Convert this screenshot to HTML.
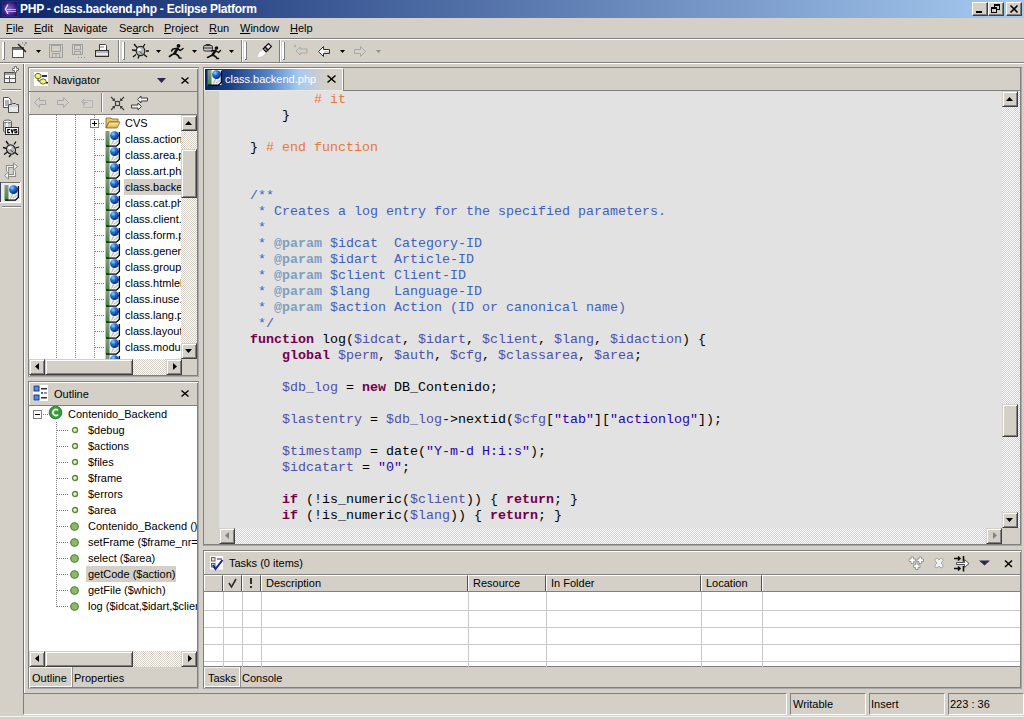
<!DOCTYPE html>
<html><head><meta charset="utf-8">
<style>
*{margin:0;padding:0;box-sizing:border-box}
html,body{width:1024px;height:719px;overflow:hidden;background:#D4D0C8;font-family:"Liberation Sans",sans-serif;font-size:11px;color:#000;position:relative}
.a{position:absolute}
.t{position:absolute;white-space:nowrap;line-height:13px}
#title{left:0;top:0;width:1024px;height:18px;background:linear-gradient(to right,#0A246A 0%,#A6CAF0 100%)}
.wb{position:absolute;width:16px;height:14px;top:2px;background:#D4D0C8;border:1px solid;border-color:#fff #404040 #404040 #fff;box-shadow:inset -1px -1px #808080}
.hl{position:absolute;height:1px}
.vl{position:absolute;width:1px}
.pnl{position:absolute;background:#D4D0C8;border-style:solid;border-width:1px;border-color:#808080 #A8A8A8 #A8A8A8 #808080;box-shadow:inset 1px 1px #fff,inset -1px -1px #808080}
.btn{position:absolute;background:#D4D0C8;border:1px solid;border-color:#D4D0C8 #404040 #404040 #D4D0C8;box-shadow:inset 1px 1px #fff,inset -1px -1px #808080}
.trk{position:absolute;background:repeating-conic-gradient(#fff 0 25%,#D4D0C8 0 50%) 0 0/2px 2px}
.code{font-family:"Liberation Mono",monospace;font-size:13.333px;line-height:16px;white-space:pre;position:absolute;color:#000}
.kw{color:#72004C;font-weight:bold}
.v{color:#5050A8}
.s{color:#2A00B0}
.c{color:#3F5FBF}
.g{color:#7F9FBF;font-weight:bold}
.h{color:#E8783A}
svg{position:absolute;overflow:visible}
.dv{position:absolute;width:1px;background:repeating-linear-gradient(to bottom,#808080 0 1px,transparent 1px 2px)}
.dh{position:absolute;height:1px;background:repeating-linear-gradient(to right,#808080 0 1px,transparent 1px 2px)}
</style></head><body>
<svg width="0" height="0" style="position:absolute">
<defs>
<radialGradient id="gb" cx="35%" cy="30%" r="70%"><stop offset="0" stop-color="#9CD0FF"/><stop offset=".45" stop-color="#1E6FD8"/><stop offset="1" stop-color="#0A2E80"/></radialGradient>
<linearGradient id="gs" x1="0" y1="0" x2="0" y2="1"><stop offset="0" stop-color="#8A9A8A"/><stop offset="1" stop-color="#3A8A3A"/></linearGradient>
<linearGradient id="fy" x1="0" y1="0" x2="0" y2="1"><stop offset="0" stop-color="#FFF2A8"/><stop offset="1" stop-color="#D8B040"/></linearGradient>
<symbol id="php" viewBox="0 0 16 16">
 <rect x="4" y="0" width="10.5" height="15" fill="#EEF0F0"/>
 <rect x="0.5" y="0" width="4" height="15.5" fill="url(#gs)"/>
 <path d="M6.5 13.5l2.5-5M9 13l4-3" stroke="#A0A8B0" stroke-width=".9"/>
 <circle cx="9.5" cy="4.6" r="4.4" fill="url(#gb)"/>
 <path d="M14.4 1v11.2l-3 3H1" fill="none" stroke="#000" stroke-width="1.3"/>
</symbol>
<symbol id="fold" viewBox="0 0 16 16">
 <path d="M1 3h5l1 1h6v3H4L1 13z" fill="#E8C860" stroke="#806020" stroke-width=".8"/>
 <path d="M1 13l3-6h11l-3 6z" fill="url(#fy)" stroke="#806020" stroke-width=".8"/>
</symbol>
</defs>
</svg>

<!-- ============ TITLE BAR ============ -->
<div id="title" class="a">
  <svg style="left:2px;top:1px" width="16" height="16" viewBox="0 0 16 16">
    <defs><radialGradient id="ec" cx="45%" cy="50%" r="60%"><stop offset="0" stop-color="#8A6AC8"/><stop offset=".6" stop-color="#4A2A90"/><stop offset="1" stop-color="#1A1060"/></radialGradient></defs>
    <rect x="0.5" y="0.5" width="15" height="15" fill="url(#ec)" stroke="#2A2A80"/>
    <path d="M5 8.5h9M5 10.5h9" stroke="#B8A8F0" stroke-width="1"/>
    <path d="M6 3.5L3.5 8l2.5 5" fill="none" stroke="#E0D8FF" stroke-width="1.5"/>
  </svg>
  <div class="t" style="left:20px;top:3px;color:#fff;font-weight:bold;font-size:12px;letter-spacing:-0.25px">PHP - class.backend.php - Eclipse Platform</div>
  <div class="wb" style="left:972px"><div class="a" style="left:3px;top:8px;width:6px;height:2px;background:#000"></div></div>
  <div class="wb" style="left:988px">
    <div class="a" style="left:5px;top:1px;width:6px;height:6px;border:1px solid #000;border-top-width:2px"></div>
    <div class="a" style="left:2px;top:4px;width:6px;height:6px;border:1px solid #000;border-top-width:2px;background:#D4D0C8"></div>
  </div>
  <div class="wb" style="left:1006px"><svg style="left:3px;top:2px" width="8" height="8"><path d="M0.5 0.5l7 7M7.5 0.5l-7 7" stroke="#000" stroke-width="1.6"/></svg></div>
</div>

<!-- ============ MENU ============ -->
<div class="t" style="left:6px;top:22px"><u>F</u>ile</div>
<div class="t" style="left:34px;top:22px"><u>E</u>dit</div>
<div class="t" style="left:64px;top:22px"><u>N</u>avigate</div>
<div class="t" style="left:119px;top:22px">Se<u>a</u>rch</div>
<div class="t" style="left:164px;top:22px"><u>P</u>roject</div>
<div class="t" style="left:209px;top:22px"><u>R</u>un</div>
<div class="t" style="left:240px;top:22px"><u>W</u>indow</div>
<div class="t" style="left:290px;top:22px"><u>H</u>elp</div>

<div class="hl" style="left:0;top:38px;width:1024px;background:#808080"></div>
<div class="hl" style="left:0;top:39px;width:1024px;background:#fff"></div>
<div class="hl" style="left:0;top:62px;width:1024px;background:#808080"></div>
<div class="hl" style="left:0;top:63px;width:1024px;background:#fff"></div>

<!-- TOOLBAR placeholder -->
<svg style="left:0;top:40px" width="400" height="22" viewBox="0 40 400 22">
 <!-- grips -->
 <g fill="#fff"><rect x="2" y="42" width="2" height="18"/><rect x="122" y="42" width="2" height="18"/><rect x="244" y="42" width="2" height="18"/><rect x="282" y="42" width="2" height="18"/></g>
 <g fill="#808080"><rect x="4" y="42" width="1" height="18"/><rect x="3" y="59" width="2" height="1"/><rect x="124" y="42" width="1" height="18"/><rect x="123" y="59" width="2" height="1"/><rect x="246" y="42" width="1" height="18"/><rect x="245" y="59" width="2" height="1"/><rect x="284" y="42" width="1" height="18"/><rect x="283" y="59" width="2" height="1"/>
 <rect x="118" y="40" width="1" height="22"/><rect x="241" y="40" width="1" height="22"/><rect x="279" y="40" width="1" height="22"/></g>
 <g fill="#fff"><rect x="119" y="40" width="1" height="22"/><rect x="242" y="40" width="1" height="22"/><rect x="280" y="40" width="1" height="22"/></g>
 <!-- new wizard -->
 <rect x="12.5" y="47.5" width="11" height="10" fill="#fff" stroke="#505050"/>
 <rect x="13" y="48" width="10" height="2" fill="#707070"/>
 <path d="M18 44l8 8" stroke="#202020" stroke-width="1.5"/>
 <path d="M22 43h1M25 43h2M24 45h1" stroke="#606060"/>
 <!-- dropdowns -->
 <g fill="#000"><path d="M36 50h5l-2.5 3z"/><path d="M156 50h5l-2.5 3z"/><path d="M192 50h5l-2.5 3z"/><path d="M229 50h5l-2.5 3z"/><path d="M340 50h5l-2.5 3z"/></g>
 <path d="M376 50h5l-2.5 3z" fill="#909090"/>
 <!-- save disabled -->
 <g fill="none" stroke="#A0A0A0"><rect x="49.5" y="44.5" width="13" height="13"/><rect x="51.5" y="45.5" width="9" height="6"/><rect x="52.5" y="53.5" width="7" height="4"/><path d="M56 54v3"/></g>
 <!-- save all disabled -->
 <g fill="none" stroke="#A0A0A0"><rect x="72.5" y="44.5" width="10" height="10"/><rect x="74.5" y="45.5" width="6" height="4"/><rect x="74.5" y="51.5" width="6" height="3"/></g>
 <g fill="#909090"><rect x="78" y="57" width="1" height="1"/><rect x="81" y="57" width="1" height="1"/><rect x="84" y="57" width="1" height="1"/></g>
 <!-- print -->
 <path d="M99.5 44.5h6l1 1v5h-7z" fill="#fff" stroke="#404040"/>
 <path d="M100 47h4" stroke="#808080"/>
 <rect x="95.5" y="50.5" width="13" height="6" fill="#B8B8B8" stroke="#303030"/>
 <rect x="96" y="53" width="12" height="2" fill="#E8E8E8"/>
 <!-- bug -->
 <g stroke="#101010" stroke-width="1.3" fill="none"><path d="M134 44l3 3.5M145 44l-2 3M132 50l4 0.5M146 51h3M133 57l3-2.5M147 57l-3-2.5M138 58.5l1-2.5"/></g>
 <ellipse cx="140.5" cy="51" rx="4.3" ry="4.6" fill="#B8B8B8" stroke="#202020" stroke-width="1.2"/>
 <ellipse cx="139.3" cy="49.5" rx="1.9" ry="1.6" fill="#F4F4F4"/>
 <path d="M139.5 51.5l3 2.5" stroke="#404040"/>
 <!-- runner -->
 <g stroke="#101010" stroke-linecap="round" stroke-linejoin="round" fill="none">
  <path d="M177.5 48.5l-3 5" stroke-width="2.6"/>
  <path d="M176 48.5l-3 0.5-1.5 2M178 49l2.5 1.5 2.5-2" stroke-width="1.5"/>
  <path d="M174.5 53.5l-3 1.5-2 1.5M175 53.5l3 2 1.5 2.5h1.5" stroke-width="1.7"/>
 </g>
 <circle cx="178.5" cy="45.8" r="1.9" fill="#101010"/>
 <!-- external tools -->
 <rect x="203.5" y="45.5" width="9" height="5.5" rx="1.5" fill="#C8C8C8" stroke="#303030"/>
 <path d="M206 45.5v-1h4v1M204 48h8" stroke="#303030" fill="none"/>
 <g stroke="#101010" stroke-linecap="round" stroke-linejoin="round" fill="none">
  <path d="M215.5 50.5l-3 4.5" stroke-width="2.4"/>
  <path d="M214 50.5l-2.5 0.5M216 51l2.5 1.5 2-2" stroke-width="1.4"/>
  <path d="M212.5 55l-3 1.5-2 1M213 55l3 2 1 1.5h1.5" stroke-width="1.6"/>
 </g>
 <circle cx="216.5" cy="48" r="1.8" fill="#101010"/>
 <!-- brush -->
 <path d="M265 47l3.5-3.5 3 3-3.5 3.5z" fill="#E8E8E8" stroke="#101010" stroke-width="1.1"/>
 <path d="M263 49l2-2 3 3-2 2z" fill="#909090" stroke="#101010" stroke-width="1.1"/>
 <path d="M262.5 49.5l3.5 3.5-3.5 3.5-5.5 1.5 1.5-5z" fill="#FCFCFC" stroke="#C8C8C8" stroke-width=".7"/>
 <!-- last edit disabled -->
 <path d="M300 47l-4 4 4 4v-2h7v-4h-7z" fill="none" stroke="#A8A8A8"/>
 <circle cx="295" cy="46" r="1.2" fill="#B0B0B0"/>
 <!-- back -->
 <path d="M323.5 46.5l-5 5 5 5v-3h6v-4h-6z" fill="#fff" stroke="#303030"/>
 <path d="M324 52h5" stroke="#A0A0A0"/>
 <!-- forward disabled -->
 <path d="M360.5 46.5l5 5-5 5v-3h-6v-4h6z" fill="none" stroke="#A8A8A8"/>
</svg>


<!-- ============ LEFT SHORTCUT BAR ============ -->
<div class="vl" style="left:23px;top:64px;height:650px;background:#707070"></div>
<div class="vl" style="left:24px;top:64px;height:629px;background:#fff"></div>
<svg style="left:0;top:64px" width="23" height="150" viewBox="0 64 23 150">
 <!-- open perspective -->
 <rect x="4.5" y="72.5" width="11" height="10" fill="#F4F4F4" stroke="#505050"/>
 <rect x="5" y="73" width="10" height="2" fill="#A0A0A0"/>
 <path d="M5 78.5h10M9.5 76v6" stroke="#606060"/>
 <path d="M14.5 66.5h2v2h2v2h-2v2h-2v-2h-2v-2h2z" fill="#fff" stroke="#707070"/>
 <rect x="2" y="89" width="19" height="1" fill="#808080"/><rect x="2" y="90" width="19" height="1" fill="#fff"/>
 <!-- resource -->
 <path d="M3.5 97.5h5l2.5 2.5v7.5h-7.5z" fill="#fff" stroke="#505050"/>
 <path d="M5 101h4M5 103h4M5 105h3" stroke="#606060"/>
 <path d="M8.5 104.5h3l1-1h3l1 1h2v8h-10z" fill="#D0D0D0" stroke="#505050"/>
 <rect x="9" y="107" width="9" height="5" fill="#E8E8E8"/>
 <!-- cvs -->
 <path d="M3.5 121.5v9.5a4 1.5 0 0 0 8 0v-9.5" fill="#C8C8C8" stroke="#606060"/>
 <ellipse cx="7.5" cy="121.5" rx="4" ry="1.5" fill="#F0F0F0" stroke="#606060"/>
 <rect x="6" y="123" width="2" height="6" fill="#F0F0F0"/>
 <rect x="5.5" y="127.5" width="13" height="7" fill="#fff" stroke="#303030"/>
 <g stroke="#000" stroke-width="1.2" fill="none"><path d="M10 129.5h-2.2v3.2H10M11 129.2l1.2 3.5 1.2-3.5M17 129.5h-2.3v1.5h2v1.7h-2.3"/></g>
 <!-- debug -->
 <g stroke="#101010" stroke-width="1.3"><path d="M6 141l2.5 3.5M16 141.5l-2 3M3 147.5l4 1M15.5 148l3.5-1M4 154.5l3.5-2.5M15 152.5l3 2.5M9 157l2-2.5"/></g>
 <ellipse cx="11" cy="149.5" rx="4.3" ry="4.8" transform="rotate(-35 11 149.5)" fill="#B8B8B8" stroke="#202020" stroke-width="1.2"/>
 <ellipse cx="9.8" cy="147.8" rx="1.8" ry="1.5" fill="#F4F4F4"/>
 <path d="M10.5 150l3 2.5" stroke="#404040"/>
 <!-- team sync -->
 <g fill="none" stroke-linejoin="miter">
  <path d="M14 166.5H7.5v5" stroke="#8A8A8A" stroke-width="3.2"/>
  <path d="M14 166.5H7.5v5" stroke="#F4F4F4" stroke-width="1.2"/>
  <path d="M8 175.5h6.5v-5" stroke="#8A8A8A" stroke-width="3.2"/>
  <path d="M8 175.5h6.5v-5" stroke="#F4F4F4" stroke-width="1.2"/>
 </g>
 <path d="M13.5 163l4 3.5-4 3.5z" fill="#F4F4F4" stroke="#8A8A8A"/>
 <path d="M8.5 172l-4 3.5 4 3.5z" fill="#F4F4F4" stroke="#8A8A8A"/>
 <!-- selected php button -->
 <rect x="0" y="182" width="21" height="21" fill="#EEECE8"/>
 <rect x="0" y="182" width="21" height="1" fill="#707070"/><rect x="0" y="182" width="1" height="21" fill="#404060"/>
 <rect x="0" y="202" width="21" height="1" fill="#fff"/><rect x="20" y="182" width="1" height="21" fill="#fff"/>
 <rect x="2" y="206" width="19" height="1" fill="#808080"/><rect x="2" y="207" width="19" height="1" fill="#fff"/>
</svg>
<svg style="left:4px;top:185px" width="16" height="16"><use href="#php"/></svg>


<!-- ============ NAVIGATOR ============ -->
<div class="pnl" style="left:28px;top:67px;width:171px;height:310px"></div>
<div id="nav">
<svg style="left:33px;top:71px" width="16" height="16" viewBox="0 0 16 16">
 <rect x="1" y="1" width="14" height="14" fill="#fff"/>
 <path d="M5 6v4h3" fill="none" stroke="#303030"/>
 <ellipse cx="5" cy="5" rx="3.2" ry="2.6" fill="#F0F080" stroke="#707020"/>
 <ellipse cx="10" cy="10.5" rx="3.2" ry="2.6" fill="#F0F080" stroke="#707020"/>
 <rect x="9" y="4" width="5" height="2" fill="#303060"/>
 <rect x="13" y="11" width="2" height="1.5" fill="#202020"/>
</svg>
<div class="t" style="left:53px;top:74px">Navigator</div>
<svg style="left:157px;top:78px" width="10" height="5"><path d="M0 0h9L4.5 5z" fill="#2A2A50"/></svg>
<svg style="left:181px;top:77px" width="8" height="7"><path d="M0.5 0.5l7 6M7.5 0.5l-7 6" stroke="#000" stroke-width="1.4"/></svg>
<div class="hl" style="left:29px;top:91px;width:168px;background:#808080"></div>
<div class="hl" style="left:29px;top:114px;width:168px;background:#808080"></div>
<svg style="left:28px;top:92px" width="130" height="22" viewBox="28 92 130 22">
 <g fill="none" stroke="#A8A8A8">
  <path d="M39.5 97.5l-5 5 5 5v-3h6v-4h-6z"/>
  <path d="M63.5 97.5l5 5-5 5v-3h-6v-4h6z"/>
  <path d="M84.5 98.5l-3 3 3 3v-2h3" />
  <rect x="83.5" y="100.5" width="9" height="7" stroke="#B8B8B8"/>
 </g>
 <rect x="101" y="93" width="1" height="19" fill="#808080"/><rect x="102" y="93" width="1" height="19" fill="#fff"/>
 <g stroke="#404040" stroke-width="1.2" fill="none">
  <rect x="115.5" y="101.5" width="4" height="4"/>
  <path d="M111 97l3.5 3.5M124 97l-3.5 3.5M111 110l3.5-3.5M124 110l-3.5-3.5"/>
 </g>
 <g fill="#404040"><path d="M115 101l-3 0 3-3z"/><path d="M120 101h3l-3-3z"/><path d="M115 106h-3l3 3z"/><path d="M120 106h3l-3 3z"/></g>
 <path d="M137.5 99.5l3.5-3.5v2h6.5v3h-6.5v2z" fill="#F0F0F0" stroke="#404040"/>
 <path d="M141.5 106.5l-3.5-3.5v2h-6.5v3h6.5v2z" fill="#F0F0F0" stroke="#404040"/>
</svg>
<div class="a" style="left:29px;top:115px;width:152px;height:244px;background:#fff;overflow:hidden">
<div class="dv" style="left:27px;top:0;height:244px"></div>
<div class="dv" style="left:46px;top:0;height:244px"></div>
<div class="dv" style="left:65px;top:0;height:244px"></div>
<div class="a" style="left:61px;top:4px;width:9px;height:9px;background:#fff;border:1px solid #808080"></div>
<div class="a" style="left:63px;top:8px;width:5px;height:1px;background:#000"></div>
<div class="a" style="left:65px;top:6px;width:1px;height:5px;background:#000"></div>
<div class="dh" style="left:70px;top:8px;width:6px"></div>
<svg style="left:76px;top:0px" width="16" height="16"><use href="#fold"/></svg>
<div class="t" style="left:96px;top:2px">CVS</div>
<div class="dh" style="left:66px;top:24px;width:10px"></div>
<svg style="left:76px;top:16px" width="16" height="16"><use href="#php"/></svg>
<div class="t" style="left:96px;top:18px">class.action.php</div>
<div class="dh" style="left:66px;top:40px;width:10px"></div>
<svg style="left:76px;top:32px" width="16" height="16"><use href="#php"/></svg>
<div class="t" style="left:96px;top:34px">class.area.php</div>
<div class="dh" style="left:66px;top:56px;width:10px"></div>
<svg style="left:76px;top:48px" width="16" height="16"><use href="#php"/></svg>
<div class="t" style="left:96px;top:50px">class.art.php</div>
<div class="a" style="left:95px;top:64px;width:70px;height:16px;background:#D4D0C8"></div>
<div class="dh" style="left:66px;top:72px;width:10px"></div>
<svg style="left:76px;top:64px" width="16" height="16"><use href="#php"/></svg>
<div class="t" style="left:96px;top:66px">class.backend.php</div>
<div class="dh" style="left:66px;top:88px;width:10px"></div>
<svg style="left:76px;top:80px" width="16" height="16"><use href="#php"/></svg>
<div class="t" style="left:96px;top:82px">class.cat.php</div>
<div class="dh" style="left:66px;top:104px;width:10px"></div>
<svg style="left:76px;top:96px" width="16" height="16"><use href="#php"/></svg>
<div class="t" style="left:96px;top:98px">class.client.php</div>
<div class="dh" style="left:66px;top:120px;width:10px"></div>
<svg style="left:76px;top:112px" width="16" height="16"><use href="#php"/></svg>
<div class="t" style="left:96px;top:114px">class.form.php</div>
<div class="dh" style="left:66px;top:136px;width:10px"></div>
<svg style="left:76px;top:128px" width="16" height="16"><use href="#php"/></svg>
<div class="t" style="left:96px;top:130px">class.generic.php</div>
<div class="dh" style="left:66px;top:152px;width:10px"></div>
<svg style="left:76px;top:144px" width="16" height="16"><use href="#php"/></svg>
<div class="t" style="left:96px;top:146px">class.group.php</div>
<div class="dh" style="left:66px;top:168px;width:10px"></div>
<svg style="left:76px;top:160px" width="16" height="16"><use href="#php"/></svg>
<div class="t" style="left:96px;top:162px">class.htmlelements.php</div>
<div class="dh" style="left:66px;top:184px;width:10px"></div>
<svg style="left:76px;top:176px" width="16" height="16"><use href="#php"/></svg>
<div class="t" style="left:96px;top:178px">class.inuse.php</div>
<div class="dh" style="left:66px;top:200px;width:10px"></div>
<svg style="left:76px;top:192px" width="16" height="16"><use href="#php"/></svg>
<div class="t" style="left:96px;top:194px">class.lang.php</div>
<div class="dh" style="left:66px;top:216px;width:10px"></div>
<svg style="left:76px;top:208px" width="16" height="16"><use href="#php"/></svg>
<div class="t" style="left:96px;top:210px">class.layout.php</div>
<div class="dh" style="left:66px;top:232px;width:10px"></div>
<svg style="left:76px;top:224px" width="16" height="16"><use href="#php"/></svg>
<div class="t" style="left:96px;top:226px">class.module.php</div>
<div class="dh" style="left:66px;top:248px;width:10px"></div>
<svg style="left:76px;top:240px" width="16" height="16"><use href="#php"/></svg>
<div class="t" style="left:96px;top:242px">class.navigation.php</div>
</div>
<div class="trk" style="left:181px;top:115px;width:16px;height:244px"></div>
<div class="btn" style="left:181px;top:115px;width:16px;height:16px"><svg style="left:3px;top:5px" width="8" height="5"><path d="M0 4h7L3.5 0z" fill="#000"/></svg></div>
<div class="btn" style="left:181px;top:149px;width:16px;height:49px"></div>
<div class="btn" style="left:181px;top:343px;width:16px;height:16px"><svg style="left:3px;top:5px" width="8" height="5"><path d="M0 0h7L3.5 4z" fill="#000"/></svg></div>
<div class="trk" style="left:29px;top:359px;width:152px;height:16px"></div>
<div class="btn" style="left:29px;top:359px;width:16px;height:16px"><svg style="left:5px;top:3px" width="5" height="8"><path d="M4 0v7L0 3.5z" fill="#000"/></svg></div>
<div class="btn" style="left:45px;top:359px;width:88px;height:16px"></div>
<div class="btn" style="left:166px;top:359px;width:16px;height:16px"><svg style="left:6px;top:3px" width="5" height="8"><path d="M0 0v7L4 3.5z" fill="#000"/></svg></div>
<div class="a" style="left:182px;top:359px;width:15px;height:16px;background:#D4D0C8"></div>
</div>


<!-- ============ OUTLINE ============ -->
<div class="pnl" style="left:28px;top:381px;width:171px;height:308px"></div>
<div id="outline">
<svg style="left:33px;top:385px" width="16" height="16" viewBox="0 0 16 16">
 <rect x="0" y="0" width="15" height="16" fill="#fff"/>
 <rect x="1" y="1" width="5" height="5" fill="#5A8AE0" stroke="#1030A0"/>
 <rect x="1" y="10" width="5" height="5" fill="#5A8AE0" stroke="#1030A0"/>
 <rect x="8" y="3" width="6" height="1.5" fill="#303030"/>
 <rect x="8" y="7" width="2" height="2" fill="#6060A0"/><rect x="11" y="7.5" width="3" height="1" fill="#303030"/>
 <rect x="8" y="12" width="6" height="1.5" fill="#303030"/>
</svg>
<div class="t" style="left:54px;top:388px">Outline</div>
<svg style="left:181px;top:390px" width="8" height="7"><path d="M0.5 0.5l7 6M7.5 0.5l-7 6" stroke="#000" stroke-width="1.4"/></svg>
<div class="hl" style="left:29px;top:405px;width:168px;background:#808080"></div>
<div class="a" style="left:29px;top:406px;width:168px;height:245px;background:#fff;overflow:hidden">
<div class="dv" style="left:27px;top:16px;height:186px"></div>
<div class="a" style="left:4px;top:4px;width:9px;height:9px;background:#fff;border:1px solid #808080"></div>
<div class="a" style="left:6px;top:8px;width:5px;height:1px;background:#000"></div>
<div class="dh" style="left:14px;top:8px;width:6px"></div>
<svg style="left:19px;top:0px" width="16" height="16" viewBox="0 0 16 16"><circle cx="7.5" cy="6.5" r="6.3" fill="#3A9A40" stroke="#2A7A30"/><path d="M10 4.3a3 3 0 1 0 0 4.4" fill="none" stroke="#E8FFE0" stroke-width="1.8"/></svg>
<div class="t" style="left:39px;top:2px">Contenido_Backend</div>
<div class="dh" style="left:28px;top:24px;width:11px"></div>
<svg style="left:42px;top:20px" width="8" height="8"><circle cx="4" cy="4" r="2.5" fill="#E8F4C8" stroke="#5A8A3A" stroke-width="1.4"/></svg>
<div class="t" style="left:59px;top:18px">$debug</div>
<div class="dh" style="left:28px;top:40px;width:11px"></div>
<svg style="left:42px;top:36px" width="8" height="8"><circle cx="4" cy="4" r="2.5" fill="#E8F4C8" stroke="#5A8A3A" stroke-width="1.4"/></svg>
<div class="t" style="left:59px;top:34px">$actions</div>
<div class="dh" style="left:28px;top:56px;width:11px"></div>
<svg style="left:42px;top:52px" width="8" height="8"><circle cx="4" cy="4" r="2.5" fill="#E8F4C8" stroke="#5A8A3A" stroke-width="1.4"/></svg>
<div class="t" style="left:59px;top:50px">$files</div>
<div class="dh" style="left:28px;top:72px;width:11px"></div>
<svg style="left:42px;top:68px" width="8" height="8"><circle cx="4" cy="4" r="2.5" fill="#E8F4C8" stroke="#5A8A3A" stroke-width="1.4"/></svg>
<div class="t" style="left:59px;top:66px">$frame</div>
<div class="dh" style="left:28px;top:88px;width:11px"></div>
<svg style="left:42px;top:84px" width="8" height="8"><circle cx="4" cy="4" r="2.5" fill="#E8F4C8" stroke="#5A8A3A" stroke-width="1.4"/></svg>
<div class="t" style="left:59px;top:82px">$errors</div>
<div class="dh" style="left:28px;top:104px;width:11px"></div>
<svg style="left:42px;top:100px" width="8" height="8"><circle cx="4" cy="4" r="2.5" fill="#E8F4C8" stroke="#5A8A3A" stroke-width="1.4"/></svg>
<div class="t" style="left:59px;top:98px">$area</div>
<div class="dh" style="left:28px;top:120px;width:11px"></div>
<svg style="left:41px;top:116px" width="10" height="10"><circle cx="4.5" cy="4.5" r="3.8" fill="#8CBA64" stroke="#4A7A30" stroke-width="1.1"/></svg>
<div class="t" style="left:59px;top:114px">Contenido_Backend ()</div>
<div class="dh" style="left:28px;top:136px;width:11px"></div>
<svg style="left:41px;top:132px" width="10" height="10"><circle cx="4.5" cy="4.5" r="3.8" fill="#8CBA64" stroke="#4A7A30" stroke-width="1.1"/></svg>
<div class="t" style="left:59px;top:130px">setFrame ($frame_nr=0)</div>
<div class="dh" style="left:28px;top:152px;width:11px"></div>
<svg style="left:41px;top:148px" width="10" height="10"><circle cx="4.5" cy="4.5" r="3.8" fill="#8CBA64" stroke="#4A7A30" stroke-width="1.1"/></svg>
<div class="t" style="left:59px;top:146px">select ($area)</div>
<div class="a" style="left:57px;top:160px;width:90px;height:16px;background:#D4D0C8"></div>
<div class="dh" style="left:28px;top:168px;width:11px"></div>
<svg style="left:41px;top:164px" width="10" height="10"><circle cx="4.5" cy="4.5" r="3.8" fill="#8CBA64" stroke="#4A7A30" stroke-width="1.1"/></svg>
<div class="t" style="left:59px;top:162px">getCode ($action)</div>
<div class="dh" style="left:28px;top:184px;width:11px"></div>
<svg style="left:41px;top:180px" width="10" height="10"><circle cx="4.5" cy="4.5" r="3.8" fill="#8CBA64" stroke="#4A7A30" stroke-width="1.1"/></svg>
<div class="t" style="left:59px;top:178px">getFile ($which)</div>
<div class="dh" style="left:28px;top:200px;width:11px"></div>
<svg style="left:41px;top:196px" width="10" height="10"><circle cx="4.5" cy="4.5" r="3.8" fill="#8CBA64" stroke="#4A7A30" stroke-width="1.1"/></svg>
<div class="t" style="left:59px;top:194px">log ($idcat,$idart,$client,$lang,$idaction)</div>
</div>
<div class="trk" style="left:29px;top:651px;width:168px;height:16px"></div>
<div class="btn" style="left:29px;top:651px;width:16px;height:16px"><svg style="left:5px;top:3px" width="5" height="8"><path d="M4 0v7L0 3.5z" fill="#000"/></svg></div>
<div class="btn" style="left:45px;top:651px;width:88px;height:16px"></div>
<div class="btn" style="left:181px;top:651px;width:16px;height:16px"><svg style="left:6px;top:3px" width="5" height="8"><path d="M0 0v7L4 3.5z" fill="#000"/></svg></div>
<div class="a" style="left:29px;top:667px;width:43px;height:20px;border-left:1px solid #fff;border-top:1px solid #F0F0EC;border-bottom:1px solid #fff;border-right:1px solid #fff;box-shadow:1px 0 #909090"></div>
<div class="t" style="left:32px;top:672px">Outline</div>
<div class="t" style="left:74px;top:672px">Properties</div>
</div>

<!-- ============ EDITOR ============ -->
<div class="pnl" style="left:203px;top:67px;width:819px;height:479px;box-shadow:inset -1px -1px #808080"></div>
<div id="editor">
 <!-- tab -->
 <div class="a" style="left:204px;top:68px;width:140px;height:23px;background:#D4D0C8;border-top:1px solid #fff;border-left:1px solid #fff;border-right:1px solid #808080;box-shadow:inset -1px 0 #fff"></div>
 <div class="a" style="left:205px;top:69px;width:120px;height:21px;background:linear-gradient(to right,#0A246A 0%,#1A3C80 20%,#5A88C8 55%,#A6CAF0 78%,#C0CCDA 90%,#D4D0C8 100%)"></div>
 <svg style="left:207px;top:70px" width="16" height="16"><use href="#php"/></svg>
 <div class="t" style="left:225px;top:73px;color:#fff">class.backend.php</div>
 <svg style="left:327px;top:75px" width="9" height="8"><path d="M0.5 0.5l8 7M8.5 0.5l-8 7" stroke="#000" stroke-width="1.5"/></svg>
 <div class="hl" style="left:344px;top:90px;width:677px;background:#808080"></div>
 <div class="hl" style="left:204px;top:90px;width:139px;background:#E8E8E4"></div>
 <!-- ruler + text area -->
 <div class="a" style="left:204px;top:91px;width:15px;height:453px;background:#D6D3CD"></div>
 <div class="a" style="left:219px;top:91px;width:783px;height:437px;background:#E2E2E2;overflow:hidden">
<div class="code" style="left:-1px;top:1px">            <span class="h"># it</span>
        }

    } <span class="h"># end function</span>


    <span class="c">/**</span>
<span class="c">     * Creates a log entry for the specified parameters.</span>
<span class="c">     *</span>
<span class="c">     * </span><span class="g">@param</span><span class="c"> $idcat  Category-ID</span>
<span class="c">     * </span><span class="g">@param</span><span class="c"> $idart  Article-ID</span>
<span class="c">     * </span><span class="g">@param</span><span class="c"> $client Client-ID</span>
<span class="c">     * </span><span class="g">@param</span><span class="c"> $lang   Language-ID</span>
<span class="c">     * </span><span class="g">@param</span><span class="c"> $action Action (ID or canonical name)</span>
<span class="c">     */</span>
    <span class="kw">function</span> log(<span class="v">$idcat</span>, <span class="v">$idart</span>, <span class="v">$client</span>, <span class="v">$lang</span>, <span class="v">$idaction</span>) {
        <span class="kw">global</span> <span class="v">$perm</span>, <span class="v">$auth</span>, <span class="v">$cfg</span>, <span class="v">$classarea</span>, <span class="v">$area</span>;

        <span class="v">$db_log</span> = <span class="kw">new</span> DB_Contenido;

        <span class="v">$lastentry</span> = <span class="v">$db_log</span>-&gt;nextid(<span class="v">$cfg</span>[<span class="s">"tab"</span>][<span class="s">"actionlog"</span>]);

        <span class="v">$timestamp</span> = date(<span class="s">"Y-m-d H:i:s"</span>);
        <span class="v">$idcatart</span> = <span class="s">"0"</span>;

        <span class="kw">if</span> (!is_numeric(<span class="v">$client</span>)) { <span class="kw">return</span>; }
        <span class="kw">if</span> (!is_numeric(<span class="v">$lang</span>)) { <span class="kw">return</span>; }
</div>
 </div>
 <!-- v scrollbar -->
 <div class="trk" style="left:1002px;top:91px;width:18px;height:437px"></div>
 <div class="btn" style="left:1002px;top:91px;width:16px;height:16px"><svg style="left:3px;top:5px" width="8" height="5"><path d="M0 4h7L3.5 0z" fill="#000"/></svg></div>
 <div class="btn" style="left:1002px;top:404px;width:16px;height:33px"></div>
 <div class="btn" style="left:1002px;top:512px;width:16px;height:16px"><svg style="left:3px;top:5px" width="8" height="5"><path d="M0 0h7L3.5 4z" fill="#000"/></svg></div>
 <!-- h scrollbar -->
 <div class="trk" style="left:219px;top:528px;width:783px;height:16px"></div>
 <div class="btn" style="left:219px;top:528px;width:16px;height:16px"><svg style="left:5px;top:3px" width="5" height="8"><path d="M4 0v7L0 3.5z" fill="#808080"/></svg></div>
 <div class="btn" style="left:986px;top:528px;width:16px;height:16px"><svg style="left:6px;top:3px" width="5" height="8"><path d="M0 0v7L4 3.5z" fill="#808080"/></svg></div>
 <div class="a" style="left:1002px;top:528px;width:18px;height:16px;background:#D4D0C8"></div>
</div>


<!-- ============ TASKS ============ -->
<div class="pnl" style="left:203px;top:550px;width:819px;height:139px"></div>
<div id="tasks">
 <svg style="left:210px;top:556px" width="14" height="14" viewBox="0 0 14 14">
  <rect x="0" y="0" width="13" height="13.5" fill="#fff"/>
  <rect x="1.5" y="1.5" width="3.5" height="3.5" fill="#E8E4D0" stroke="#606060"/>
  <rect x="1.5" y="7.5" width="3.5" height="3.5" fill="#D8E8D0" stroke="#606060"/>
  <path d="M7 3h5" stroke="#404050" stroke-width="1.2"/>
  <path d="M3 9l2.5 4 7-9" fill="none" stroke="#1020B0" stroke-width="2"/>
 </svg>
 <div class="t" style="left:229px;top:557px">Tasks (0 items)</div>
 <svg style="left:905px;top:554px" width="115" height="18" viewBox="905 554 115 18">
  <g fill="#fff" stroke="#989898" stroke-width="1">
   <path d="M911 557h2.5v2h2v2.5h-2v2h-2.5v-2h-2v-2.5h2z"/>
   <path d="M919 557h2.5v2h2v2.5h-2v2h-2.5v-2h-2v-2.5h2z"/>
   <path d="M915.5 563h2.5v2h2v2.5h-2v2h-2.5v-2h-2v-2.5h2z"/>
  </g>
  <path d="M935 559l2-1 2 2 2-2 2 1 0 2-2 2 2 2v2l-2 1-2-2-2 2-2-1v-2l2-2-2-2z" fill="#F0F0F0" stroke="#A8A8A8" stroke-width="1"/>
  <g stroke="#101010" stroke-width="1.6" fill="none"><path d="M954 558.5h6M958 556.5l2 2-2 2M963.5 556v5.5M954 568.5h6M958 566.5l2 2-2 2M963.5 566v5.5"/></g>
  <path d="M956.5 562.5h8v-3l4.5 4-4.5 4v-3h-8z" fill="#F4F4F4" stroke="#505050" stroke-width="1"/>
  <path d="M979 560.5h11l-5.5 5z" fill="#2A2A50"/>
  <path d="M1005 560.5l7 6.5M1012 560.5l-7 6.5" stroke="#000" stroke-width="1.5"/>
 </svg>
 <div class="hl" style="left:204px;top:574px;width:816px;background:#808080"></div>
 <!-- table header -->
 <!-- table body -->
 <div class="a" style="left:204px;top:592px;width:816px;height:75px;background:#fff"></div>
 <div class="hl" style="left:204px;top:610px;width:816px;background:#C8C8C8"></div>
 <div class="hl" style="left:204px;top:627px;width:816px;background:#C8C8C8"></div>
 <div class="hl" style="left:204px;top:644px;width:816px;background:#C8C8C8"></div>
 <div class="hl" style="left:204px;top:661px;width:816px;background:#C8C8C8"></div>
 <div class="hl" style="left:204px;top:666px;width:816px;background:#808080"></div>
 <div class="a" style="left:204px;top:575px;width:816px;height:17px;background:#D4D0C8"></div>
 <div class="hl" style="left:204px;top:591px;width:816px;background:#808080"></div>
 <div class="a" style="left:204px;top:575px;width:19px;height:16px;border-top:1px solid #fff;border-left:1px solid #fff;border-right:1px solid #505050"></div>
<div class="vl" style="left:223px;top:592px;height:75px;background:#C8C8C8"></div>
<div class="a" style="left:223px;top:575px;width:19px;height:16px;border-top:1px solid #fff;border-left:1px solid #fff;border-right:1px solid #505050"></div>
<svg style="left:228px;top:578px" width="9" height="10"><path d="M1 5l2.5 4L8 1" fill="none" stroke="#303030" stroke-width="1.6"/></svg>
<div class="vl" style="left:242px;top:592px;height:75px;background:#C8C8C8"></div>
<div class="a" style="left:242px;top:575px;width:19px;height:16px;border-top:1px solid #fff;border-left:1px solid #fff;border-right:1px solid #505050"></div>
<div class="a" style="left:250px;top:578px;width:2px;height:6px;background:#303030"></div><div class="a" style="left:250px;top:586px;width:2px;height:2px;background:#303030"></div>
<div class="vl" style="left:261px;top:592px;height:75px;background:#C8C8C8"></div>
<div class="a" style="left:261px;top:575px;width:207px;height:16px;border-top:1px solid #fff;border-left:1px solid #fff;border-right:1px solid #505050"></div>
<div class="t" style="left:266px;top:577px">Description</div>
<div class="vl" style="left:468px;top:592px;height:75px;background:#C8C8C8"></div>
<div class="a" style="left:468px;top:575px;width:78px;height:16px;border-top:1px solid #fff;border-left:1px solid #fff;border-right:1px solid #505050"></div>
<div class="t" style="left:473px;top:577px">Resource</div>
<div class="vl" style="left:546px;top:592px;height:75px;background:#C8C8C8"></div>
<div class="a" style="left:546px;top:575px;width:155px;height:16px;border-top:1px solid #fff;border-left:1px solid #fff;border-right:1px solid #505050"></div>
<div class="t" style="left:551px;top:577px">In Folder</div>
<div class="vl" style="left:701px;top:592px;height:75px;background:#C8C8C8"></div>
<div class="a" style="left:701px;top:575px;width:61px;height:16px;border-top:1px solid #fff;border-left:1px solid #fff;border-right:1px solid #505050"></div>
<div class="t" style="left:706px;top:577px">Location</div>
<div class="vl" style="left:762px;top:592px;height:75px;background:#C8C8C8"></div>
<div class="a" style="left:762px;top:575px;width:258px;height:16px;border-top:1px solid #fff;border-left:1px solid #fff"></div>
 <!-- bottom tabs -->
 <div class="a" style="left:204px;top:667px;width:36px;height:20px;border-left:1px solid #fff;border-top:1px solid #F0F0EC;border-bottom:1px solid #fff;border-right:1px solid #fff;box-shadow:1px 0 #909090"></div>
 <div class="t" style="left:208px;top:672px">Tasks</div>
 <div class="t" style="left:242px;top:672px">Console</div>
</div>


<!-- ============ STATUS ============ -->
<div id="status">
 <div class="hl" style="left:0;top:716px;width:1024px;background:#F4F4F0"></div>
 <div class="a" style="left:23px;top:693px;width:764px;height:22px;border-top:1px solid #808080;border-left:1px solid #808080;border-right:1px solid #fff;border-bottom:1px solid #fff"></div>
 <div class="a" style="left:790px;top:693px;width:76px;height:22px;border-top:1px solid #808080;border-left:1px solid #808080;border-right:1px solid #fff;border-bottom:1px solid #fff"></div>
 <div class="t" style="left:793px;top:698px">Writable</div>
 <div class="a" style="left:869px;top:693px;width:76px;height:22px;border-top:1px solid #808080;border-left:1px solid #808080;border-right:1px solid #fff;border-bottom:1px solid #fff"></div>
 <div class="t" style="left:871px;top:698px">Insert</div>
 <div class="a" style="left:948px;top:693px;width:76px;height:22px;border-top:1px solid #808080;border-left:1px solid #808080;border-right:1px solid #fff;border-bottom:1px solid #fff"></div>
 <div class="t" style="left:950px;top:698px">223 : 36</div>
</div>

</body></html>
